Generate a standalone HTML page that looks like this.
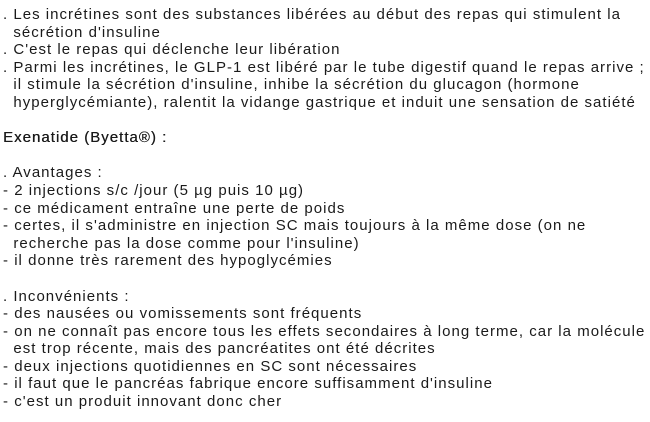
<!DOCTYPE html>
<html><head><meta charset="utf-8"><style>
html,body{margin:0;padding:0;background:#fff;width:650px;height:416px;overflow:hidden}
body{font-family:"Liberation Sans",Arial,sans-serif;font-size:15px;line-height:17.6px;color:#1a1a1a;letter-spacing:1.02px;padding-top:6px;padding-left:3px}
.l{white-space:pre;height:17.6px}
.b{text-shadow:0.3px 0 0 #1a1a1a}
</style></head><body>
<div class="l">. Les incrétines sont des substances libérées au début des repas qui stimulent la</div>
<div class="l">  sécrétion d'insuline</div>
<div class="l">. C'est le repas qui déclenche leur libération</div>
<div class="l">. Parmi les incrétines, le GLP-1 est libéré par le tube digestif quand le repas arrive ;</div>
<div class="l">  il stimule la sécrétion d'insuline, inhibe la sécrétion du glucagon (hormone</div>
<div class="l">  hyperglycémiante), ralentit la vidange gastrique et induit une sensation de satiété</div>
<div class="l"> </div>
<div class="l b">Exenatide (Byetta®) :</div>
<div class="l"> </div>
<div class="l">. Avantages :</div>
<div class="l">- 2 injections s/c /jour (5 µg puis 10 µg)</div>
<div class="l">- ce médicament entraîne une perte de poids</div>
<div class="l">- certes, il s'administre en injection SC mais toujours à la même dose (on ne</div>
<div class="l">  recherche pas la dose comme pour l'insuline)</div>
<div class="l">- il donne très rarement des hypoglycémies</div>
<div class="l"> </div>
<div class="l">. Inconvénients :</div>
<div class="l">- des nausées ou vomissements sont fréquents</div>
<div class="l">- on ne connaît pas encore tous les effets secondaires à long terme, car la molécule</div>
<div class="l">  est trop récente, mais des pancréatites ont été décrites</div>
<div class="l">- deux injections quotidiennes en SC sont nécessaires</div>
<div class="l">- il faut que le pancréas fabrique encore suffisamment d'insuline</div>
<div class="l">- c'est un produit innovant donc cher</div>
</body></html>
